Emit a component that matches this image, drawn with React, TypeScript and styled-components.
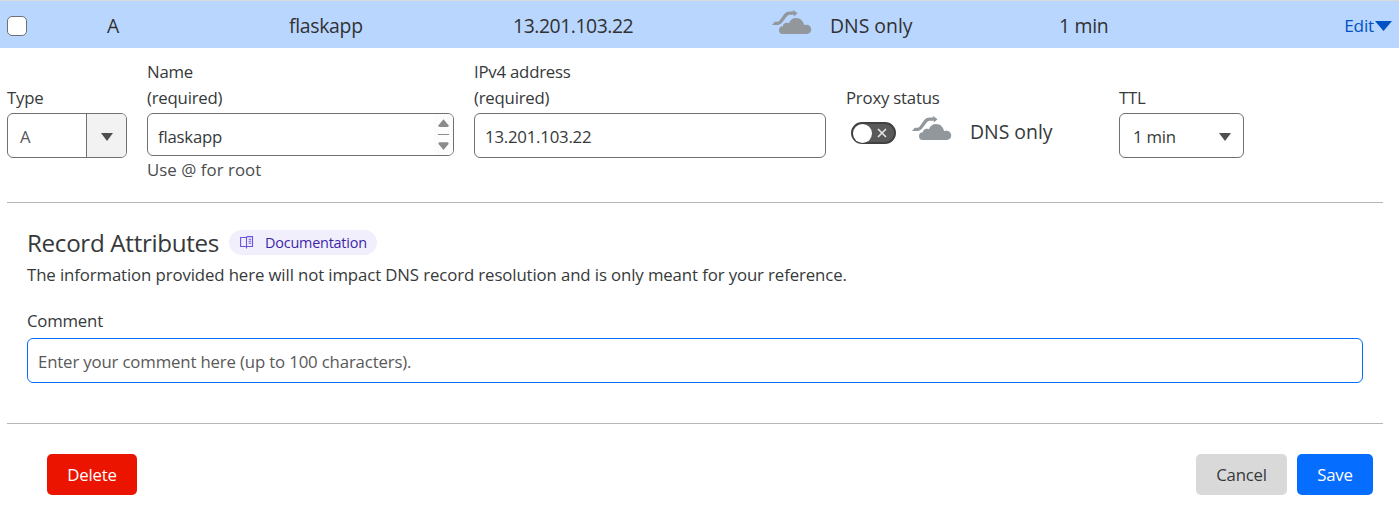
import React from "react";
import styled, { createGlobalStyle } from "styled-components";

const GlobalStyle = createGlobalStyle`
  *, *::before, *::after { box-sizing: border-box; }
  body {
    margin: 0;
    background: #fff;
    color: #36393a;
    font-family: "Open Sans", "Noto Sans", sans-serif;
    font-size: 16.8px;
    line-height: 26px;
    letter-spacing: -0.22px;
  }
`;

const Page = styled.main`
  width: 1399px;
  height: 521px;
  overflow: hidden;
`;

const RecordRow = styled.div`
  display: grid;
  grid-template-columns: 100px 182px 224px 259px 287px 1fr auto;
  align-items: center;
  height: 48px;
  padding: 3px 7px 0 7px;
  border-top: 1px solid #d9d9d9;
  background: #b9d6ff;
  font-size: 19.4px;
  letter-spacing: 0;
  color: #313131;
`;

const Cell = styled.div<{ $track?: number }>`
  display: flex;
  align-items: center;
  letter-spacing: ${(p) => p.$track ?? 0}px;
`;

const Checkbox = styled.input`
  appearance: none;
  width: 20px;
  height: 20px;
  margin: 0;
  border: 1px solid #6f7072;
  border-radius: 5px;
  background: #fff;
`;

const ProxyState = styled.div`
  display: flex;
  align-items: center;
  gap: 18px;
  height: 26px;
  font-size: 19.4px;
  letter-spacing: 0;
`;

const EditButton = styled.button`
  display: flex;
  align-items: center;
  padding: 0;
  border: 0;
  background: none;
  color: #0051c3;
  font: inherit;
  font-size: 17.2px;
  letter-spacing: -0.2px;
  gap: 1px;
`;

const Form = styled.form`
  padding: 11px 16px 0 7px;
`;

const FieldRow = styled.div`
  display: flex;
  height: 144px;
  border-bottom: 1px solid #b6b7b8;
`;

const Field = styled.div<{ $width: number; $gap?: number }>`
  width: ${(p) => p.$width}px;
  margin-right: ${(p) => p.$gap ?? 20}px;
  flex: none;
`;

const Label = styled.label`
  display: flex;
  flex-direction: column;
  justify-content: flex-end;
  height: 52px;
  margin-bottom: 2px;
`;

const Control = styled.div<{ $height?: number; $focus?: boolean }>`
  display: flex;
  align-items: stretch;
  height: ${(p) => p.$height ?? 45}px;
  border: 1px solid ${(p) => (p.$focus ? "#056dff" : "#6f7072")};
  border-radius: 6px;
  background: #fff;
  overflow: hidden;
`;

const Input = styled.input<{ $top?: number }>`
  flex: 1;
  min-width: 0;
  padding: ${(p) => p.$top ?? 3}px 10px 0;
  border: 0;
  outline: 0;
  background: transparent;
  color: #36393a;
  font: inherit;
  letter-spacing: inherit;
  &::placeholder { color: #595959; opacity: 1; letter-spacing: -0.16px; }
`;

const SelectValue = styled.span`
  flex: 1;
  padding: 10px 0 0 13px;
`;

const TypeValue = styled(SelectValue)`
  padding-left: 12px;
  color: #56585a;
`;

const Arrow = styled.span<{ $boxed?: boolean }>`
  display: flex;
  align-items: center;
  justify-content: center;
  width: ${(p) => (p.$boxed ? 40 : 38)}px;
  padding-top: 2px;
  border-left: 1px solid ${(p) => (p.$boxed ? "#6f7072" : "transparent")};
  background: ${(p) => (p.$boxed ? "#f2f2f2" : "transparent")};
`;

const Stepper = styled.span`
  display: flex;
  width: 19px;
  align-items: center;
  justify-content: center;
  background: #fcfcfc;
`;

const Hint = styled.div`
  margin-top: 1px;
  color: #4a4c4e;
  letter-spacing: 0.06px;
`;

const ProxyRow = styled.div`
  display: flex;
  align-items: center;
  gap: 16px;
  height: 38px;
  padding-left: 5px;
`;

const Switch = styled.button`
  display: flex;
  align-items: center;
  justify-content: space-between;
  width: 45px;
  height: 22px;
  margin-top: 2px;
  padding: 0 7px 0 0;
  border: 2px solid #414141;
  border-radius: 11px;
  background: #595959;
`;

const Knob = styled.span`
  width: 19px;
  height: 19px;
  border-radius: 50%;
  background: #fff;
`;

const Attributes = styled.section`
  height: 221px;
  padding: 25px 20px 0;
  border-bottom: 1px solid #b6b7b8;
`;

const TitleRow = styled.div`
  display: flex;
  align-items: center;
  gap: 10px;
  height: 30px;
`;

const Title = styled.h2`
  width: 192px;
  margin: 0;
  font-size: 24.2px;
  font-weight: 400;
  line-height: 30px;
  letter-spacing: -0.32px;
  white-space: nowrap;
`;

const DocLink = styled.a`
  display: flex;
  align-items: center;
  gap: 11px;
  width: 148px;
  height: 25px;
  margin-bottom: 2px;
  padding: 1px 0 0 11px;
  border-radius: 13px;
  background: #f2effd;
  color: #3b27a8;
  font-size: 14.4px;
  letter-spacing: -0.2px;
`;

const Description = styled.p`
  margin: 4px 0 20px;
  letter-spacing: -0.11px;
`;

const CommentLabel = styled.label`
  display: block;
  margin-bottom: 4px;
`;

const Actions = styled.div`
  display: flex;
  gap: 10px;
  padding: 30px 10px 0 40px;
`;

const Button = styled.button<{ $bg: string; $fg: string; $width: number }>`
  width: ${(p) => p.$width}px;
  height: 41px;
  padding: 1px 0 0;
  border: 0;
  border-radius: 5px;
  background: ${(p) => p.$bg};
  color: ${(p) => p.$fg};
  font: inherit;
  letter-spacing: inherit;
`;

const Spacer = styled.span`
  flex: 1;
`;

const CloudSvg = styled.svg`
  flex: none;
  margin-bottom: 6px;
`;

const CloudIcon = () => (
  <CloudSvg width="40" height="26" viewBox="0 0 40 26" fill="#92979b">
    <path d="M0 15 L2.8 11.8 H4.8 C6.4 11.8 7.2 11.1 8.2 9.7 L11.4 5.2 C13.2 2.6 15.2 1.6 18 1.6 H21.2 L20.8 -.2 L25.5 3.2 L21.9 6.6 V4.8 H18.7 C16.7 4.8 15.5 5.3 14.1 7.2 L10.9 11.6 C9.2 14 7.8 15 5.2 15 Z" />
    <path d="M11 24 A3.9 3.9 0 0 1 10.9 16.2 C10.9 13.4 14.1 12 17 13.2 C18 10 20.7 8 24 8 C28.2 8 31.3 10.8 32 15.1 C32.6 14.9 33.5 14.8 34.4 14.8 A4.6 4.6 0 0 1 34.9 24 Z" />
  </CloudSvg>
);

const Triangle = ({ w, h, color }: { w: number; h: number; color: string }) => (
  <svg width={w} height={h} viewBox="0 0 10 6" preserveAspectRatio="none" fill={color}>
    <path d="M0 0 H10 L5 6 Z" />
  </svg>
);

const StepperIcon = () => (
  <svg width="11" height="32" viewBox="0 0 11 32" fill="#8b8b8b">
    <path d="M5.5 0.3 L10.5 6.2 Q11 8 9.5 8 H1.5 Q0 8 .5 6.2 Z" />
    <path d="M0 15 H11 V16 H0 Z" />
    <path d="M5.5 31 L10.5 25.1 Q11 23.3 9.5 23.3 H1.5 Q0 23.3 .5 25.1 Z" />
  </svg>
);

const BookIcon = () => (
  <svg width="14" height="13" viewBox="0 0 14 13" fill="none" stroke="#6a55dc" strokeWidth="1.1">
    <path d="M6.5 1.5 H.6 V10.5 H6.5 V12.6 M6.5 .6 V10.5 M6.5 1.5 L7.6 .6 H12.5 V10.5 H6.5" />
    <path d="M8.6 3.2 H11.2 M8.6 5.2 H11.2 M8.6 7.2 H11.2" />
  </svg>
);

export default function App() {
  return (
    <>
      <GlobalStyle />
      <Page>
        <RecordRow>
          <Checkbox type="checkbox" />
          <Cell>A</Cell>
          <Cell $track={-0.3}>flaskapp</Cell>
          <Cell $track={-0.46}>13.201.103.22</Cell>
          <ProxyState><CloudIcon />DNS only</ProxyState>
          <Cell $track={-0.3}>1 min</Cell>
          <EditButton>Edit<Triangle w={17} h={10} color="#0051c3" /></EditButton>
        </RecordRow>

        <Form onSubmit={(e) => e.preventDefault()}>
          <FieldRow>
            <Field $width={120}>
              <Label>Type</Label>
              <Control>
                <TypeValue>A</TypeValue>
                <Arrow $boxed><Triangle w={12} h={8} color="#4f4f4f" /></Arrow>
              </Control>
            </Field>
            <Field $width={307}>
              <Label><span>Name</span><span>(required)</span></Label>
              <Control $height={43}>
                <Input $top={5} defaultValue="flaskapp" />
                <Stepper><StepperIcon /></Stepper>
              </Control>
              <Hint>Use @ for root</Hint>
            </Field>
            <Field $width={352}>
              <Label><span>IPv4 address</span><span>(required)</span></Label>
              <Control><Input defaultValue="13.201.103.22" /></Control>
            </Field>
            <Field $width={253}>
              <Label>Proxy status</Label>
              <ProxyRow>
                <Switch type="button">
                  <Knob />
                  <svg width="10" height="10" viewBox="0 0 10 10" stroke="#e6e6e6" strokeWidth="1.6">
                    <path d="M1 1 L9 9 M9 1 L1 9" />
                  </svg>
                </Switch>
                <ProxyState><CloudIcon />DNS only</ProxyState>
              </ProxyRow>
            </Field>
            <Field $width={125}>
              <Label>TTL</Label>
              <Control>
                <SelectValue>1 min</SelectValue>
                <Arrow><Triangle w={12} h={8} color="#4f4f4f" /></Arrow>
              </Control>
            </Field>
          </FieldRow>

          <Attributes>
            <TitleRow>
              <Title>Record Attributes</Title>
              <DocLink><BookIcon />Documentation</DocLink>
            </TitleRow>
            <Description>
              The information provided here will not impact DNS record resolution and is only meant for your reference.
            </Description>
            <CommentLabel>Comment</CommentLabel>
            <Control $focus>
              <Input placeholder="Enter your comment here (up to 100 characters)." />
            </Control>
          </Attributes>

          <Actions>
            <Button $bg="#eb1400" $fg="#fff" $width={90}>Delete</Button>
            <Spacer />
            <Button $bg="#d9d9d9" $fg="#36393a" $width={91}>Cancel</Button>
            <Button $bg="#056dff" $fg="#fff" $width={76}>Save</Button>
          </Actions>
        </Form>
      </Page>
    </>
  );
}
